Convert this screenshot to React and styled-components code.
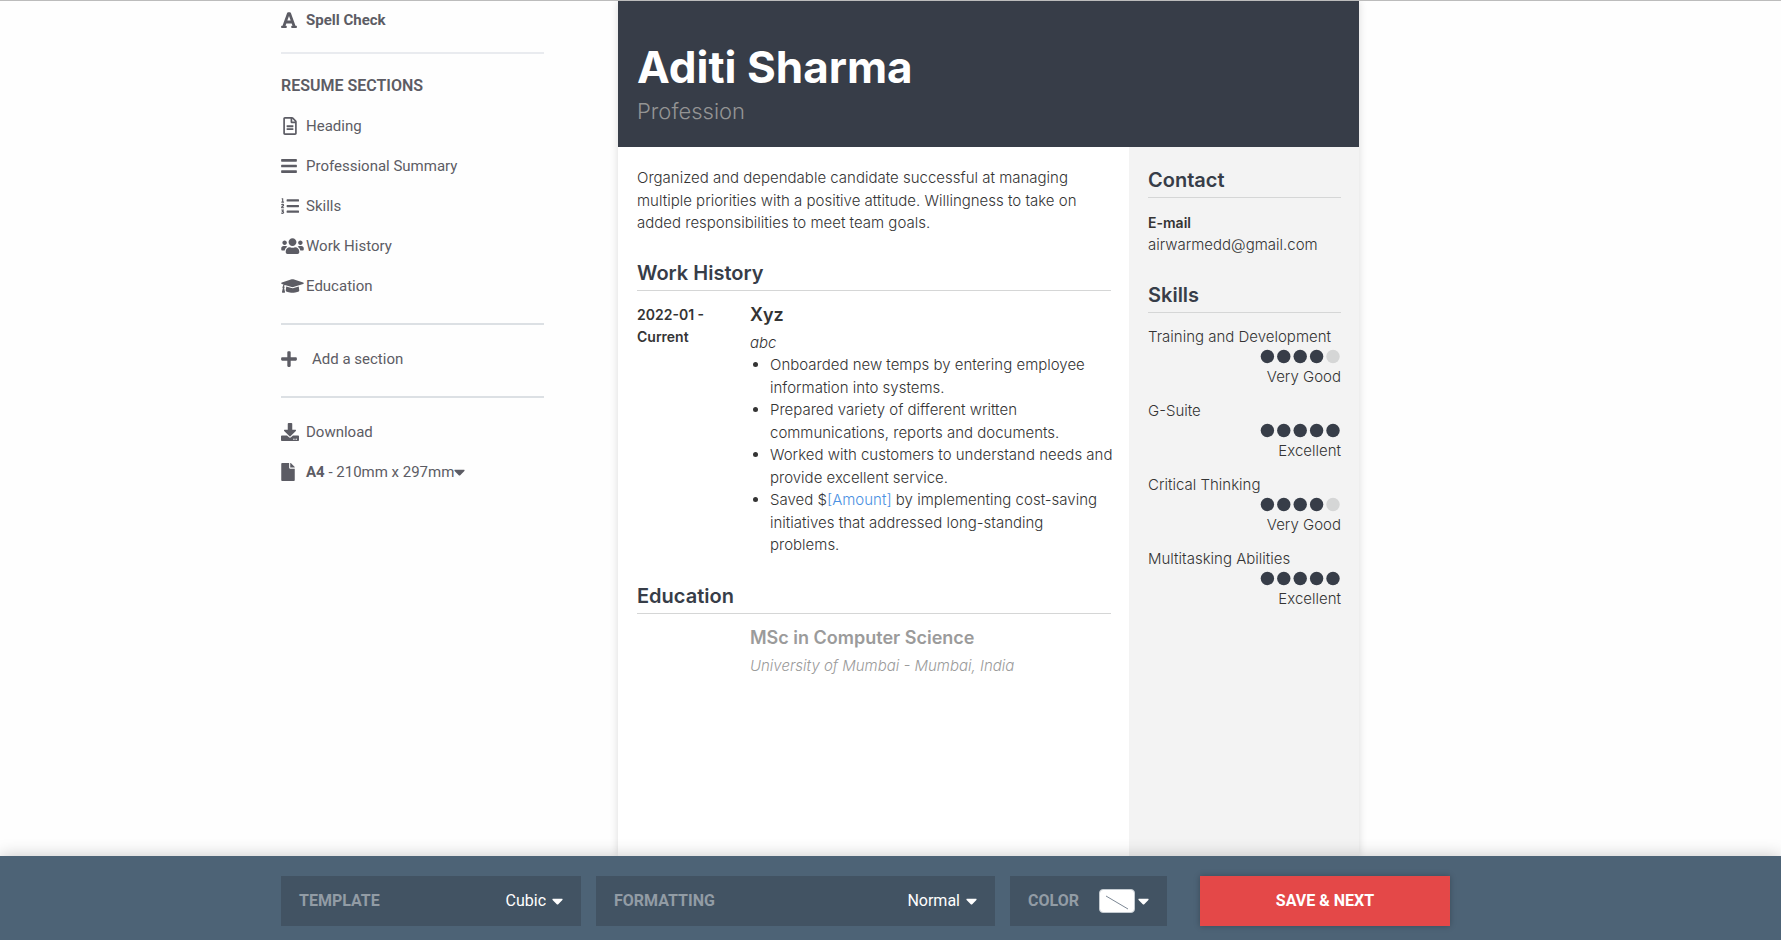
import React from "react";
import styled, { createGlobalStyle } from "styled-components";
import {
  FaFont,
  FaRegFileAlt,
  FaBars,
  FaListOl,
  FaUsers,
  FaGraduationCap,
  FaPlus,
  FaDownload,
  FaFile,
  FaCaretDown,
} from "react-icons/fa";

const ui = `Roboto, "Liberation Sans", sans-serif`;
const resume = `Inter, "Open Sans", sans-serif`;
const navy = "#373d48";

const GlobalStyle = createGlobalStyle`
  * { box-sizing: border-box; }
  body { margin: 0; background: #fefefe; color: #5c5c64; font: 400 16px/20px ${ui}; }
  h1, h2, h3, p, ul, hr { margin: 0; padding: 0; }
  button, select { font: inherit; color: inherit; background: none; border: 0; padding: 0; cursor: pointer; }
`;

const Shell = styled.div`
  display: flex;
  flex-direction: column;
  height: 100vh;
  border-top: 1px solid #bcbcbc;
`;

const Viewport = styled.main`
  flex: 1;
  min-height: 0;
  overflow: hidden;
  padding-right: 50px;
`;

const Frame = styled.div`
  display: flex;
  width: 100%;
  max-width: 1169px;
  min-height: 100%;
  margin: 0 auto;
`;

const Sidebar = styled.nav`
  flex: 0 0 263px;
  display: flex;
  flex-direction: column;
  align-items: stretch;
  padding-top: 9px;
`;

const NavButton = styled.button`
  display: flex;
  align-items: center;
  height: 20px;
  margin-bottom: ${(p) => (p.$last ? 0 : 20)}px;
  text-align: left;
  white-space: nowrap;
  font-size: 15px;
  font-weight: ${(p) => (p.$bold ? 700 : 400)};
`;

const NavIcon = styled.span`
  display: flex;
  flex: 0 0 ${(p) => (p.$wide ? 31 : 25)}px;
  padding-left: ${(p) => (p.$inset ? 2 : 0)}px;
  svg {
    flex: none;
    width: ${(p) => p.$size}px;
    height: 18px;
  }
`;

const Caret = styled(FaCaretDown)`
  flex: none;
  width: 11px;
  height: 18px;
`;

const Rule = styled.hr`
  border: 0;
  height: 2px;
  background: ${(p) => (p.$light ? "#e9ebef" : "#dce0e4")};
  margin: ${(p) => (p.$light ? "22px 0" : "27px 0 24px")};
`;

const NavTitle = styled.h2`
  font-size: 16px;
  line-height: 20px;
  font-weight: 600;
  margin-bottom: 20px;
`;

const Sheet = styled.article`
  flex: 1;
  display: flex;
  flex-direction: column;
  margin: 0 91px 0 74px;
  background: #fff;
  color: #343434;
  font-family: ${resume};
  font-size: 15px;
  font-weight: 300;
  line-height: 1.5;
  box-shadow: 0 0 8px rgba(0, 0, 0, 0.14);
`;

const Banner = styled.header`
  height: 146px;
  padding: 38px 19px 0;
  background: ${navy};
`;

const Name = styled.h1`
  color: #fff;
  font-size: 44px;
  line-height: 56px;
  font-weight: 700;
`;

const Profession = styled.p`
  color: #949494;
  font-size: 22px;
  line-height: 32px;
`;

const Columns = styled.div`
  flex: 1;
  display: flex;
`;

const MainColumn = styled.div`
  flex: 1;
  padding: 20px 18px 0 19px;
`;

const SideColumn = styled.aside`
  flex: 0 0 230px;
  padding: 18px 18px 0 19px;
  background: #f3f3f3;
`;

const SectionTitle = styled.h2`
  margin: 23px 0 13px;
  padding-bottom: 2px;
  border-bottom: 1px solid #d5d6d6;
  color: ${navy};
  font-size: 20px;
  line-height: 30px;
  font-weight: 600;

  ${SideColumn} & {
    margin-bottom: 14px;
  }
  &:first-child {
    margin-top: 0;
  }
`;

const Entry = styled.div`
  display: grid;
  grid-template-columns: 113px 1fr;
  margin-bottom: 24px;
  color: ${(p) => (p.$muted ? "#9b9b9b" : "inherit")};
`;

const Dates = styled.div`
  padding-right: 30px;
  font-size: 14px;
  line-height: 22px;
  font-weight: 600;
`;

const EntryTitle = styled.h3`
  margin-bottom: 6px;
  font-size: 18px;
  line-height: 22px;
  font-weight: 600;
`;

const Place = styled.p`
  font-style: italic;
`;

const Bullets = styled.ul`
  margin-right: -3px;
  padding-left: 20px;
`;

const Placeholder = styled.span`
  color: #4a90e2;
`;

const Strong = styled.p`
  font-size: 14px;
  line-height: 22px;
  font-weight: 600;
`;

const Skill = styled.div`
  margin-bottom: 14px;
  line-height: 20px;
`;

const SkillLevel = styled.div`
  display: flex;
  flex-direction: column;
  align-items: flex-end;
`;

const Bar = styled.footer`
  position: relative;
  flex: none;
  padding: 20px 50px 14px 0;
  background: #4d6376;
  box-shadow: 0 0 16px rgba(0, 0, 0, 0.22);
`;

const BarRow = styled.div`
  display: flex;
  gap: 15px;
  width: 100%;
  max-width: 1169px;
  margin: 0 auto;
`;

const Field = styled.div`
  flex: ${(p) => p.$flex};
  display: flex;
  align-items: center;
  height: 50px;
  padding: 0 18px;
  background: #425363;
  color: #fff;
`;

const FieldLabel = styled.label`
  color: #929ca5;
  font-weight: 700;
`;

const Select = styled.select`
  flex: 1;
  min-width: 0;
  margin-right: 6px;
  appearance: none;
  outline: 0;
  text-align: right;
  text-align-last: right;
  option {
    color: #333;
  }
`;

const SwatchButton = styled.button`
  display: flex;
  align-items: center;
  gap: 3px;
  margin-left: auto;
`;

const Swatch = styled.svg`
  border: 1px solid #c4cbd1;
  border-radius: 4px;
  background: #fff;
`;

const SaveButton = styled.button`
  flex: 0 0 250px;
  height: 50px;
  margin-left: 18px;
  background: #e44848;
  color: #fff;
  font-weight: 700;
  box-shadow: 0 0 6px rgba(0, 0, 0, 0.25);
`;

const sections = [
  { label: "Heading", icon: <FaRegFileAlt />, size: 14, inset: true },
  { label: "Professional Summary", icon: <FaBars />, size: 16 },
  { label: "Skills", icon: <FaListOl />, size: 18 },
  { label: "Work History", icon: <FaUsers />, size: 23 },
  { label: "Education", icon: <FaGraduationCap />, size: 23 },
];

const skills = [
  { name: "Training and Development", score: 4, level: "Very Good" },
  { name: "G-Suite", score: 5, level: "Excellent" },
  { name: "Critical Thinking", score: 4, level: "Very Good" },
  { name: "Multitasking Abilities", score: 5, level: "Excellent" },
];

function Rating({ score }) {
  return (
    <svg width="81" height="20" viewBox="0 0 81 20" role="img" aria-label={`${score} of 5`}>
      {[0, 1, 2, 3, 4].map((i) => (
        <circle key={i} cx={7.4 + i * 16.4} cy="9.5" r="6.7" fill={i < score ? navy : "#d5d6d6"} />
      ))}
    </svg>
  );
}

export default function App() {
  return (
    <Shell>
      <GlobalStyle />
      <Viewport>
        <Frame>
          <Sidebar>
            <NavButton $bold $last>
              <NavIcon $size={16}><FaFont /></NavIcon>Spell Check
            </NavButton>
            <Rule $light />
            <NavTitle>RESUME SECTIONS</NavTitle>
            {sections.map((s, i) => (
              <NavButton key={s.label} $last={i === sections.length - 1}>
                <NavIcon $size={s.size} $inset={s.inset}>{s.icon}</NavIcon>
                {s.label}
              </NavButton>
            ))}
            <Rule />
            <NavButton $last>
              <NavIcon $size={16} $wide><FaPlus /></NavIcon>Add a section
            </NavButton>
            <Rule />
            <NavButton>
              <NavIcon $size={18}><FaDownload /></NavIcon>Download
            </NavButton>
            <NavButton>
              <NavIcon $size={14}><FaFile /></NavIcon>
              <span><b>A4</b> - 210mm x 297mm</span>
              <Caret />
            </NavButton>
          </Sidebar>
          <Sheet>
            <Banner>
              <Name>Aditi Sharma</Name>
              <Profession>Profession</Profession>
            </Banner>
            <Columns>
              <MainColumn>
                <p>
                  Organized and dependable candidate successful at managing multiple priorities with
                  a positive attitude. Willingness to take on added responsibilities to meet team
                  goals.
                </p>
                <SectionTitle>Work History</SectionTitle>
                <Entry>
                  <Dates>2022-01 - Current</Dates>
                  <div>
                    <EntryTitle>Xyz</EntryTitle>
                    <Place>abc</Place>
                    <Bullets>
                      <li>Onboarded new temps by entering employee information into systems.</li>
                      <li>Prepared variety of different written communications, reports and documents.</li>
                      <li>Worked with customers to understand needs and provide excellent service.</li>
                      <li>
                        Saved $<Placeholder>[Amount]</Placeholder> by implementing cost-saving
                        initiatives that addressed long-standing problems.
                      </li>
                    </Bullets>
                  </div>
                </Entry>
                <SectionTitle>Education</SectionTitle>
                <Entry $muted>
                  <div />
                  <div>
                    <EntryTitle>MSc in Computer Science</EntryTitle>
                    <Place>University of Mumbai - Mumbai, India</Place>
                  </div>
                </Entry>
              </MainColumn>
              <SideColumn>
                <SectionTitle>Contact</SectionTitle>
                <Strong>E-mail</Strong>
                <p>airwarmedd@gmail.com</p>
                <SectionTitle>Skills</SectionTitle>
                {skills.map((s) => (
                  <Skill key={s.name}>
                    {s.name}
                    <SkillLevel>
                      <Rating score={s.score} />
                      {s.level}
                    </SkillLevel>
                  </Skill>
                ))}
              </SideColumn>
            </Columns>
          </Sheet>
        </Frame>
      </Viewport>
      <Bar>
        <BarRow>
          <Field $flex="3 1 300px">
            <FieldLabel htmlFor="template">TEMPLATE</FieldLabel>
            <Select id="template"><option>Cubic</option></Select>
            <Caret />
          </Field>
          <Field $flex="4 1 399px">
            <FieldLabel htmlFor="formatting">FORMATTING</FieldLabel>
            <Select id="formatting"><option>Normal</option></Select>
            <Caret />
          </Field>
          <Field $flex="0 0 157px">
            <FieldLabel htmlFor="color">COLOR</FieldLabel>
            <SwatchButton id="color">
              <Swatch width="36" height="24" viewBox="0 0 34 22">
                <path d="M6 6 L28 19" stroke="#7c8794" strokeWidth="1" />
              </Swatch>
              <Caret />
            </SwatchButton>
          </Field>
          <SaveButton>SAVE &amp; NEXT</SaveButton>
        </BarRow>
      </Bar>
    </Shell>
  );
}
